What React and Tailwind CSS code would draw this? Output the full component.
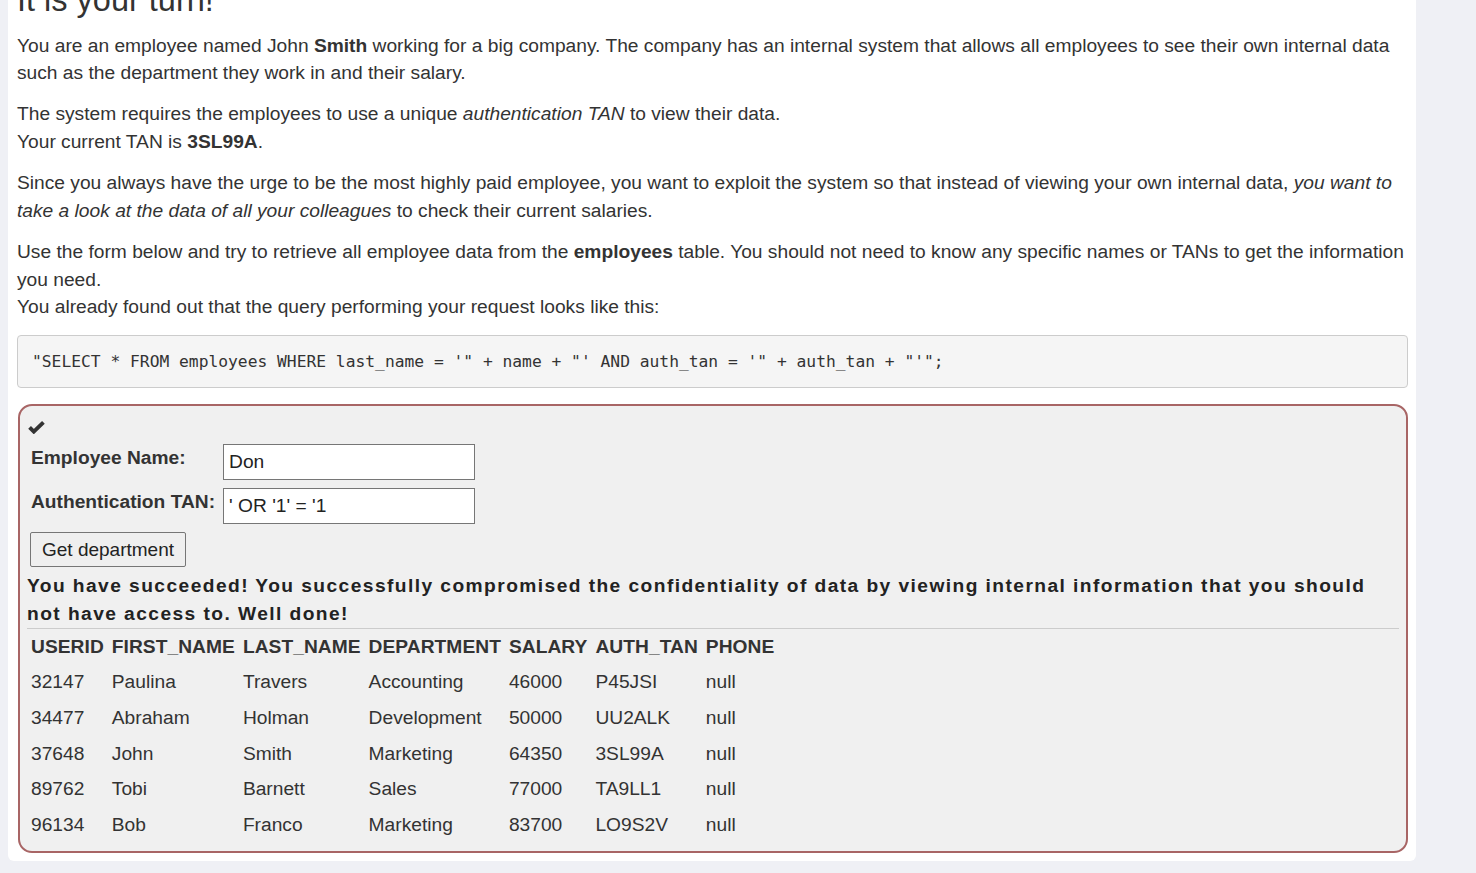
import React from "react";

const rows = [
  ["32147", "Paulina", "Travers", "Accounting", "46000", "P45JSI", "null"],
  ["34477", "Abraham", "Holman", "Development", "50000", "UU2ALK", "null"],
  ["37648", "John", "Smith", "Marketing", "64350", "3SL99A", "null"],
  ["89762", "Tobi", "Barnett", "Sales", "77000", "TA9LL1", "null"],
  ["96134", "Bob", "Franco", "Marketing", "83700", "LO9S2V", "null"],
];

const cols = ["USERID", "FIRST_NAME", "LAST_NAME", "DEPARTMENT", "SALARY", "AUTH_TAN", "PHONE"];

function Check() {
  return (
    <svg width="17" height="13" viewBox="0 0 17 13" fill="none">
      <path d="M1.6 6.4 L5.8 10.6 L15.4 1.4" stroke="#333" strokeWidth="3.9" strokeLinejoin="miter" />
    </svg>
  );
}

export default function App() {
  return (
    <div className="min-h-screen bg-[#eff0f5] pl-2 font-['Liberation_Sans',Arial,sans-serif] text-[#333]">
      <div className="flow-root w-[1408px] rounded-b-md bg-white pl-[9px] pr-2 pb-2">
        {/* lesson text */}
        <h2 className="-mt-[16.5px] text-[32.5px] leading-none font-normal">It is your turn!</h2>

        <div className="mt-[15.5px] text-[19.2px] leading-[27.43px]">
          <p className="mb-[14px]">
            You are an employee named John <b>Smith</b> working for a big company. The company has an internal system
            that allows all employees to see their own internal data such as the department they work in and their salary.
          </p>
          <p className="mb-[14px]">
            The system requires the employees to use a unique <i>authentication TAN</i> to view their data.
            <br />
            Your current TAN is <b>3SL99A</b>.
          </p>
          <p className="mb-[14px]">
            Since you always have the urge to be the most highly paid employee, you want to exploit the system so that
            instead of viewing your own internal data, <i>you want to take a look at the data of all your colleagues</i> to
            check their current salaries.
          </p>
          <p className="mb-[14px]">
            Use the form below and try to retrieve all employee data from the <b>employees</b> table. You should not need
            to know any specific names or TANs to get the information you need.
            <br />
            You already found out that the query performing your request looks like this:
          </p>
        </div>

        <pre className="mt-[15px] rounded border border-[#ccc] bg-[#f5f5f5] py-[14px] pl-[14px] font-['DejaVu_Sans_Mono',monospace] text-[16.3px] leading-[23px] text-[#333]">
          {`"SELECT * FROM employees WHERE last_name = '" + name + "' AND auth_tan = '" + auth_tan + "'";`}
        </pre>

        {/* attack form */}
        <div className="mt-4 ml-px rounded-[14px] border-2 border-[#a86565] bg-[#f0f0f0] px-[7px] pt-2 pb-2 text-[19.2px]">
          <div className="flex h-[26px] items-center pl-px">
            <Check />
          </div>

          <table className="border-collapse">
            <tbody>
              <tr>
                <td className="px-1 py-1 align-top font-bold leading-[27px]">Employee Name:</td>
                <td className="px-1 py-1">
                  <input
                    defaultValue="Don"
                    className="h-9 w-[252px] border border-[#767676] bg-white px-[5px] text-[19.2px] text-[#222] outline-none"
                  />
                </td>
              </tr>
              <tr>
                <td className="px-1 py-1 align-top font-bold leading-[27px]">Authentication TAN:</td>
                <td className="px-1 py-1">
                  <input
                    defaultValue="' OR '1' = '1"
                    className="h-9 w-[252px] border border-[#767676] bg-white px-[5px] text-[19.2px] text-[#222] outline-none"
                  />
                </td>
              </tr>
            </tbody>
          </table>

          <button className="mt-1 ml-[3px] h-[35px] rounded-[2px] border border-[#767676] bg-[#efefef] px-[11px] text-[19px] text-[#222]">
            Get department
          </button>

          <div className="mt-[5px] border-b border-[#ccc] text-[19.2px] leading-[28px] font-bold tracking-[1.43px] text-[#222]">
            You have succeeded! You successfully compromised the confidentiality of data by viewing internal information
            that you should not have access to. Well done!
          </div>

          <table className="border-collapse text-left">
            <thead>
              <tr className="h-[35.6px]">
                {cols.map((c) => (
                  <th key={c} className="px-1 font-bold tracking-[0.05px]">
                    {c}
                  </th>
                ))}
              </tr>
            </thead>
            <tbody>
              {rows.map((r) => (
                <tr key={r[0]} className="h-[35.6px]">
                  {r.map((v, i) => (
                    <td key={i} className="px-1">
                      {v}
                    </td>
                  ))}
                </tr>
              ))}
            </tbody>
          </table>
        </div>
      </div>
    </div>
  );
}
